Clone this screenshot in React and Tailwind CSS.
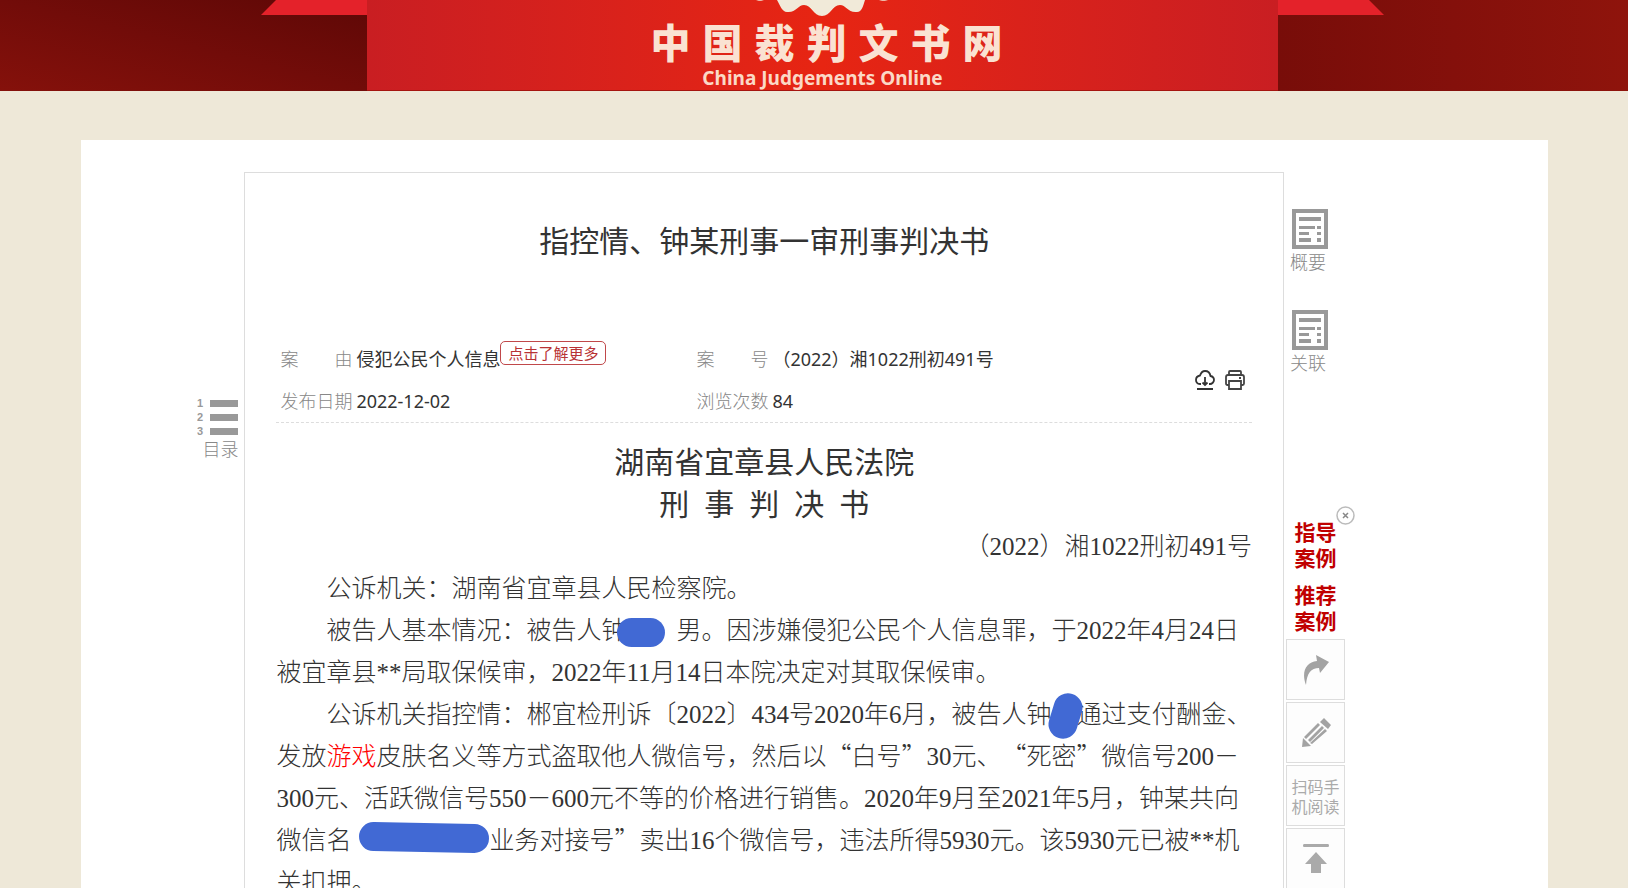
import React from 'react';

const SITE_NAME = ['中', '国', '裁', '判', '文', '书', '网'];

function Header() {
    return (
        <header className="flex h-[91px] overflow-hidden">
            <div className="flex-[367] flex justify-end bg-linear-to-tr from-[#85110b] via-[#720c09] to-[#5e0806]">
                <svg width="106" height="15" viewBox="0 0 106 15">
                    <path d="M15 0H106V15H0Z" fill="#e4222a" />
                </svg>
            </div>
            <div className="w-[56%] flex flex-col items-center bg-linear-to-r from-[#c91e22] via-[#e72512] to-[#c91e22] border-b border-[#a51510]">
                {/* bottom edge of the emblem */}
                <svg width="132" height="17" viewBox="0 0 132 17" className="shrink-0">
                    <path d="M21 0C24 5 26 12 31 12C40 13 42 5 48 5C56 5 57 16 66 16C75 16 76 5 84 5C90 5 92 13 101 12C106 12 107 6 109 0Z" fill="#f1ead9" />
                    <path d="M0 0C2 1 6 1 8 0ZM123 0C125 1 130 1 132 0Z" fill="#f1ead9" />
                </svg>
                <h1 className="flex gap-3 pl-2 mt-[2px] text-[40px] leading-[44px] font-black text-[#fae2d2]">
                    {SITE_NAME.map(c => <span key={c}>{c}</span>)}
                </h1>
                <p className="mt-[2px] font-['Noto_Sans',sans-serif] text-[19px] leading-[26px] font-bold text-[#fbd9c6]">China Judgements Online</p>
            </div>
            <div className="flex-[350] bg-linear-to-r from-[#780d09] via-[#84100b] to-[#8f140c]">
                <svg width="106" height="15" viewBox="0 0 106 15">
                    <path d="M0 0H91L106 15H0Z" fill="#e4222a" />
                </svg>
            </div>
        </header>
    );
}

function DocIcon() {
    return (
        <svg width="36" height="40" viewBox="0 0 36 40" fill="#999">
            <path fillRule="evenodd" d="M0 0H36V40H0ZM4 4V36H32V4Z" />
            <path d="M7 8H29V12H7ZM7 17H23V20H7ZM7 23H17V26H7ZM7 29H19V33H7ZM25 17H29V20H25ZM25 23H29V26H25ZM25 29H29V33H25Z" />
        </svg>
    );
}

function RailLink({ label }) {
    return (
        <a href="#" className="flex flex-col w-9 text-lg leading-6 font-light text-[#888]">
            <span className="pl-[2px]"><DocIcon /></span>
            {label}
        </a>
    );
}

function ToolButton({ label, children }) {
    return (
        <button type="button" aria-label={label} className="w-[59px] h-[61px] flex items-center justify-center border border-[#ddd] bg-[#fdfdfd] text-[#a3a3a3]">
            {children}
        </button>
    );
}

function Meta({ label, children }) {
    return (
        <div className="flex gap-1 h-[42px] items-center">
            <dt className="w-18 shrink-0 flex justify-between whitespace-nowrap font-light text-[#888]">{label}</dt>
            <dd className="flex text-[#333] whitespace-nowrap">{children}</dd>
        </div>
    );
}

// full-width curly quotes
function Q({ children }) {
    return <span className="font-['Noto_Sans_CJK_SC',sans-serif] leading-none">{children}</span>;
}

function LeftRail() {
    return (
        <aside className="w-[163px] shrink-0 flex flex-col items-end pr-[6px] pt-[227px]">
            <a href="#" className="flex flex-col items-end text-lg leading-6 font-light text-[#888]">
                <svg width="41" height="37" viewBox="0 0 41 37" fill="#999" className="font-['Liberation_Sans',sans-serif] text-[11px] font-bold">
                    <path d="M13 1H41V8H13ZM13 15H41V22H13ZM13 29H41V36H13Z" />
                    <text x="0" y="8">1</text>
                    <text x="0" y="22">2</text>
                    <text x="0" y="36">3</text>
                </svg>
                目录
            </a>
        </aside>
    );
}

function RightRail() {
    return (
        <aside className="w-[264px] shrink-0 flex flex-col items-start pl-[2px] pt-[37px]">
            <div className="flex flex-col gap-[37px] pl-1">
                <RailLink label="概要" />
                <RailLink label="关联" />
            </div>
            <div className="relative mt-36 w-[59px] flex flex-col items-center gap-[11px] text-[21px] leading-[26px] font-bold text-[#c00000]">
                <a href="#" className="w-[42px] text-center">指导案例</a>
                <a href="#" className="w-[42px] text-center">推荐案例</a>
                <button type="button" aria-label="关闭" className="absolute -top-3 -right-[10px]">
                    <svg width="19" height="19" viewBox="0 0 19 19" fill="none" stroke="#bbb">
                        <circle cx="9.5" cy="9.5" r="8.5" strokeWidth="1.5" />
                        <path d="M7 7L12 12M12 7L7 12" stroke="#888" strokeWidth="1.5" />
                    </svg>
                </button>
            </div>
            <div className="mt-[6px] flex flex-col gap-[2px]">
                <ToolButton label="分享">
                    <svg width="28" height="32" viewBox="0 0 28 32" fill="currentColor">
                        <path d="M14 1L27 8L18 19L17 14C9 14 5 19 4 31C-1 18 4 8 15 7Z" />
                    </svg>
                </ToolButton>
                <ToolButton label="纠错">
                    <svg width="30" height="30" viewBox="0 0 30 30" fill="currentColor">
                        <path d="M1 29L2 20L10 28ZM3 19L17 5L19 7L5 21ZM7 22L21 8L23 10L9 24ZM11 26L9 25L24 11L26 13ZM19 4L23 0L30 7L27 11Z" />
                    </svg>
                </ToolButton>
                <ToolButton label="扫码手机阅读">
                    <span className="w-12 text-base leading-5 text-[#aaa]">扫码手机阅读</span>
                </ToolButton>
                <ToolButton label="返回顶部">
                    <svg width="26" height="30" viewBox="0 0 26 30" fill="#aaa">
                        <path d="M1 0H25Q26 0 26 1.500Q26 3 25 3H1Q0 3 0 1.500Q0 0 1 0ZM13 8L24 20H18V29H8V20H2Z" />
                    </svg>
                </ToolButton>
            </div>
        </aside>
    );
}

export default function App() {
    return (
        <div lang="zh-CN" className="h-screen overflow-hidden bg-[#eee8d8] font-['Noto_Sans_CJK_SC',sans-serif]">
            <Header />
            <main className="mt-[49px] ml-[5%] mr-20 pt-8 flex bg-white">
                <LeftRail />

                <article className="flex-1 min-w-0 px-[31px] border border-[#ddd] text-[#333]">
                    <h2 className="mt-11 text-[30px] leading-[44px] text-center">指控情、钟某刑事一审刑事判决书</h2>

                    {/* case info */}
                    <div className="mt-[77px] pl-1 pr-[7px] flex items-center justify-between border-b border-dashed border-[#ddd] font-['Noto_Sans','Noto_Sans_CJK_SC',sans-serif] text-lg">
                        <dl className="flex-1 grid grid-cols-[416px_1fr]">
                            <Meta label={<><span>案</span><span>由</span></>}>
                                侵犯公民个人信息
                                <a href="#" className="h-6 px-[7px] -mt-1 border border-[#c0484a] rounded-[5px] text-[15px] leading-[22px] text-[#b83235]">点击了解更多</a>
                            </Meta>
                            <Meta label={<><span>案</span><span>号</span></>}>（2022）湘1022刑初491号</Meta>
                            <Meta label="发布日期">2022-12-02</Meta>
                            <Meta label="浏览次数">84</Meta>
                        </dl>
                        <div className="flex gap-[10px]">
                            <button type="button" aria-label="下载">
                                <svg width="20" height="20" viewBox="0 0 20 20" fill="none" stroke="#333" strokeWidth="1.8">
                                    <path d="M6 14H5C2 14 1 12 1 10C1 8 2 6 5 5.500C6 2.500 8 1 10 1C13 1 15 3 15.500 6C18 6.500 19 8 19 10C19 12 17 14 15 14H14M10 7V15M7.500 12.500L10 15L12.500 12.500M2 19H18" />
                                </svg>
                            </button>
                            <button type="button" aria-label="打印">
                                <svg width="20" height="20" viewBox="0 0 20 20" fill="none" stroke="#444" strokeWidth="1.8">
                                    <path d="M4 5V2Q4 1 5 1H15Q16 1 16 2V5M4 15H2.500Q1 15 1 13.500V7Q1 5 3 5H17Q19 5 19 7V13.500Q19 15 17.500 15H16M4 11H16V19H4ZM14 8H16" />
                                </svg>
                            </button>
                        </div>
                    </div>

                    {/* judgement text */}
                    <div className="pt-[19px] text-[25px] leading-[42px] [text-spacing-trim:space-all] font-['Liberation_Serif','Noto_Sans_CJK_SC',serif] font-light">
                        <h3 className="text-[30px] font-normal text-center">湖南省宜章县人民法院</h3>
                        <h3 className="text-[30px] font-normal text-center whitespace-pre">刑  事  判  决  书</h3>
                        <p className="text-right">（2022）湘1022刑初491号</p>
                        <p className="indent-[50px]">公诉机关：湖南省宜章县人民检察院。</p>
                        <p className="indent-[50px]">
                            被告人基本情况：被告人钟
                            <span className="relative inline-block w-[50px] h-5 align-middle">
                                <span className="absolute -left-[9px] -top-[5px] w-12 h-[29px] rounded-full bg-[#4169d4]" />
                            </span>
                            男。因涉嫌侵犯公民个人信息罪，于2022年4月24日被宜章县**局取保候审，2022年11月14日本院决定对其取保候审。
                        </p>
                        <p className="indent-[50px]">
                            公诉机关指控情：郴宜检刑诉〔2022〕434号2020年6月，被告人钟
                            <span className="relative inline-block w-[25px] h-5 align-middle">
                                <span className="absolute left-0 -top-[14px] w-[29px] h-[46px] rounded-full rotate-[17deg] bg-[#4169d4]" />
                            </span>
                            通过支付酬金、发放<span className="text-[#f00]">游戏</span>皮肤名义等方式盗取他人微信号，然后以<Q>“</Q>白号<Q>”</Q>30元、<Q>“</Q>死密<Q>”</Q>微信号200－300元、活跃微信号550－600元不等的价格进行销售。2020年9月至2021年5月，钟某共向微信名
                            <span className="relative inline-block w-[138px] h-5 align-middle">
                                <span className="absolute left-2 -top-[10px] w-[130px] h-[29px] rounded-full rotate-1 bg-[#4169d4]" />
                            </span>
                            业务对接号<Q>”</Q>卖出16个微信号，违法所得5930元。该5930元已被**机关扣押。
                        </p>
                    </div>
                </article>

                <RightRail />
            </main>
        </div>
    );
}
